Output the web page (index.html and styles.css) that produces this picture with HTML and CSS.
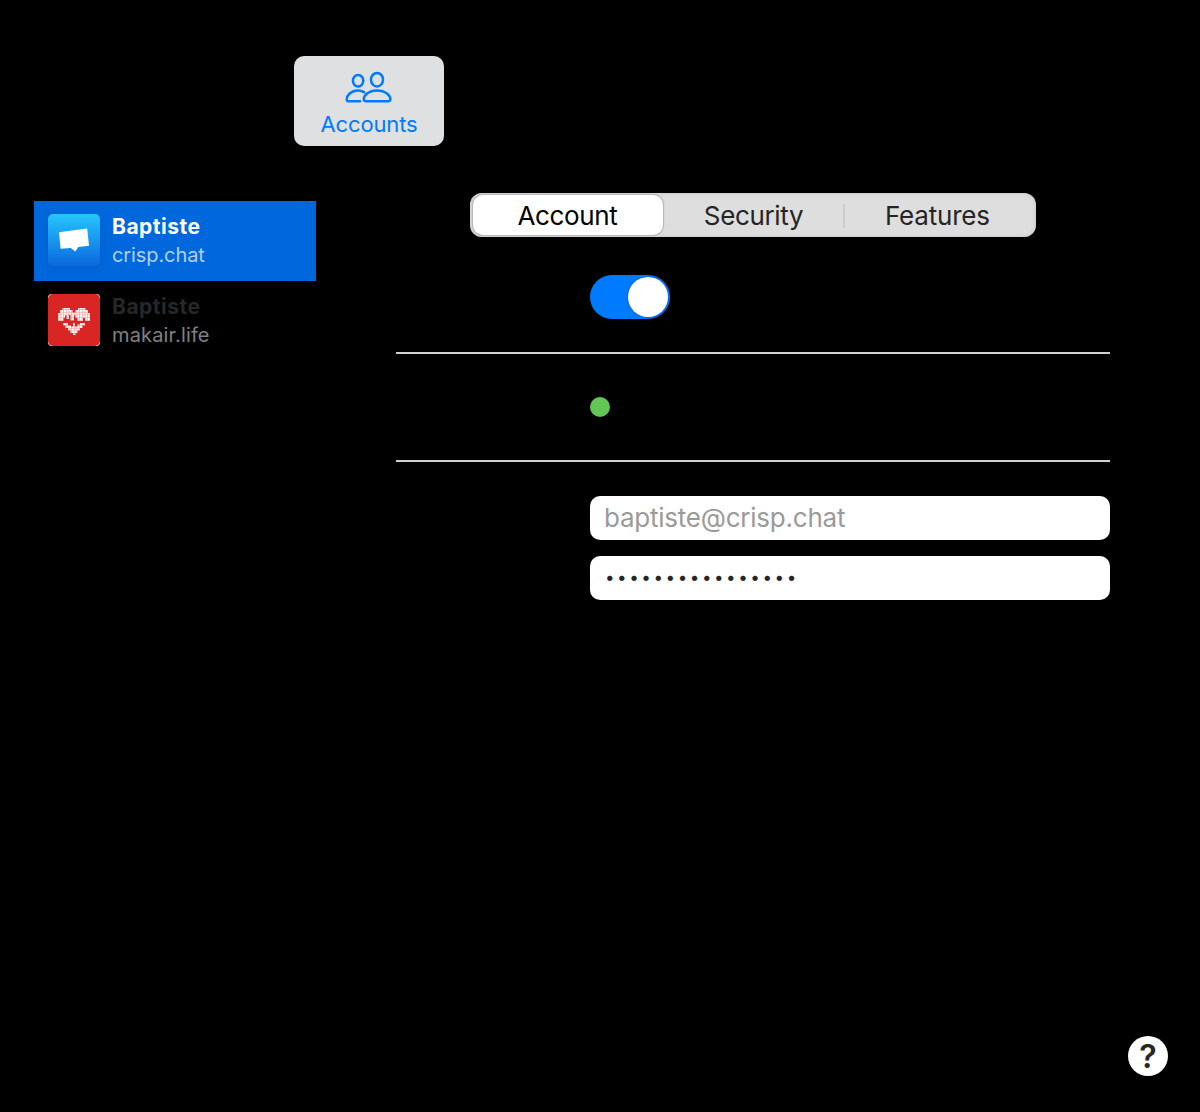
FILE: index.html
```html
<!DOCTYPE html>
<html lang="en">
<head>
<meta charset="utf-8">
<title>Accounts</title>
<link rel="stylesheet" href="styles.css">
</head>
<body>
<header class="toolbar">
  <button class="tool">
    <svg class="tool-icon" width="50" height="36" viewBox="0 0 50 36" fill="none" stroke="#007aff" stroke-width="2.5" stroke-linecap="round" stroke-linejoin="round">
      <ellipse cx="14.1" cy="11.8" rx="5.2" ry="5.8"/>
      <ellipse cx="33" cy="10.7" rx="6" ry="6.8"/>
      <path d="M20.2 23.2C18.5 22 16.5 21.4 14.1 21.4C6.8 21.4 2.7 26.8 2.7 30.2C2.7 31.6 3.5 32.3 5 32.3H16"/>
      <path d="M33 21.4C24.3 21.4 19.8 26.7 19.8 30.1C19.8 31.6 20.6 32.3 22.2 32.3H44C45.6 32.3 46.4 31.6 46.4 30.1C46.4 26.7 41.7 21.4 33 21.4Z"/>
    </svg>
    <span class="tool-label">Accounts</span>
  </button>
</header>
<main class="content">
  <nav class="sidebar">
    <div class="account selected">
      <svg class="avatar" width="52" height="52" viewBox="0 0 52 52">
        <defs><linearGradient id="sky" x1="0" y1="0" x2="0" y2="1"><stop offset="0" stop-color="#27c5fc"/><stop offset="1" stop-color="#0b68df"/></linearGradient></defs>
        <rect width="52" height="52" rx="5" fill="url(#sky)"/>
        <path d="M11 18.2L39.2 14.6L41 31.8L30.4 33L27.2 37.6L22.8 34L12.6 34.8Z" fill="#fff"/>
      </svg>
      <div class="who"><span class="name">Baptiste</span><span class="domain crisp">crisp.chat</span></div>
    </div>
    <div class="account">
      <svg class="avatar" width="52" height="52" viewBox="0 0 52 52">
        <defs><pattern id="cells" width="2.67" height="2.67" patternUnits="userSpaceOnUse"><rect width="2.67" height="2.67" fill="#efa09d"/><rect width="2" height="2" fill="#fff"/></pattern></defs>
        <rect width="52" height="52" rx="4" fill="#fff"/>
        <rect width="52" height="52" rx="5" fill="#d92624"/>
        <path d="M10 19H12V16H14.5V14H22V16H24.5V18.5H27.5V16H30V14H37.5V16H40V19H42V27H37V24H35V27H29.5V24H27.5V21.5H26V26.5H22.5V21H21V25H18.5V21.5H17V24H15.5V27H10Z M15 29H20V31.5H23V32.5H25V29H27V32.5H29.5V30.5H32V29H37V31.5H34.5V34H32V36.5H29.5V39H27.5V41H25V39H22.5V36.5H20V34H17.5V31.5H15Z" fill="url(#cells)"/>
      </svg>
      <div class="who"><span class="name">Baptiste</span><span class="domain makair">makair.life</span></div>
    </div>
  </nav>
  <section class="panel">
    <div class="tabs">
      <button class="tab active"><span>Account</span></button>
      <button class="tab security"><span>Security</span></button>
      <button class="tab features"><span>Features</span></button>
    </div>
    <div class="switch"><i class="knob"></i></div>
    <hr class="rule">
    <div class="status"></div>
    <hr class="rule">
    <div class="fields">
      <div class="field email"><span>baptiste@crisp.chat</span></div>
      <div class="field password"><span>••••••••••••••••</span></div>
    </div>
  </section>
</main>
<footer class="footer"><button class="help">?</button></footer>
</body>
</html>
```
FILE: styles.css
```css
* { box-sizing: border-box; }
body {
  margin: 0;
  width: 1200px;
  height: 1112px;
  display: flex;
  flex-direction: column;
  background: #000;
  font-family: Inter, "Liberation Sans", sans-serif;
  overflow: hidden;
}
button { border: 0; padding: 0; margin: 0; font: inherit; background: none; }
.toolbar { height: 193px; padding: 56px 0 0 294px; }
.tool {
  width: 150px; height: 90px;
  display: flex; flex-direction: column; align-items: center;
  padding-top: 13px;
  border-radius: 10px;
  background: #dfe0e1;
  color: #007aff;
}
.tool-icon { display: block; }
.tool-label { font-size: 22px; line-height: 26px; margin-top: 6px; letter-spacing: -.15px; }
.content { display: flex; flex: 1; }
.sidebar { width: 282px; margin: 8px 80px 0 34px; }
.account { display: flex; gap: 12px; height: 80px; padding: 13px 14px; color: #262728; }
.selected { background: #0068dc; color: #fff; }
.selected .avatar { filter: drop-shadow(0 2px 3px rgba(0, 50, 140, .2)); }
.avatar { flex: none; }
.who { display: flex; flex-direction: column; }
.name { font-size: 21px; line-height: 26px; font-weight: 700; letter-spacing: .5px; }
.domain { font-size: 20px; line-height: 26px; margin-top: 2px; color: #808080; }
.crisp { letter-spacing: -.1px; }
.makair { letter-spacing: .15px; }
.selected .domain { color: #b0d0f5; }
.panel { width: 714px; }
.tabs {
  display: flex;
  width: 566px; height: 44px;
  margin-left: 74px;
  padding: 2px;
  border-radius: 12px;
  background: #dedede;
  box-shadow: inset 0 0 4px #c4c4c4;
}
.tab { display: flex; align-items: center; justify-content: center; padding-top: 2px; font-size: 26px; line-height: 32px; letter-spacing: -.35px; color: #252525; }
.active { width: 190px; height: 40px; margin-left: 1px; border-radius: 10px; background: #fff; color: #000; box-shadow: 0 0 1px 1px #b5b5b5; }
.active span { margin-right: 1px; }
.security { width: 180px; padding-left: 1px; }
.features { flex: 1; justify-content: flex-start; letter-spacing: -.2px; }
.features::before { content: ""; width: 2px; height: 24px; margin-right: 40px; background: #cbcbcb; }
.switch { width: 80px; height: 44px; margin: 38px 0 0 194px; padding: 2px; border-radius: 22px; background: #007aff; display: flex; justify-content: flex-end; }
.knob { width: 40px; height: 40px; border-radius: 50%; background: #fff; box-shadow: 0 0 2px rgba(0, 30, 90, .5); }
.rule { height: 2px; border: 0; margin: 33px 0 0; background: #d1d1d1; }
.status { width: 20px; height: 20px; margin: 43px 0 43px 194px; border-radius: 50%; background: #61c654; }
.status + .rule { margin-top: 0; }
.fields { display: grid; gap: 16px; margin: 34px 0 0 194px; }
.field { height: 44px; padding: 0 14px; border-radius: 10px; background: #fff; font-size: 26px; line-height: 43px; white-space: nowrap; }
.email { color: #9a9a9a; letter-spacing: -.23px; }
.password { padding-left: 15px; color: #252525; font-size: 17px; line-height: 42px; letter-spacing: 2.55px; }
.footer { display: flex; justify-content: flex-end; padding: 0 32px 36px; }
.help { width: 40px; height: 40px; border-radius: 50%; background: #fff; color: #262728; font-size: 32px; font-weight: 600; line-height: 42px; }
```
